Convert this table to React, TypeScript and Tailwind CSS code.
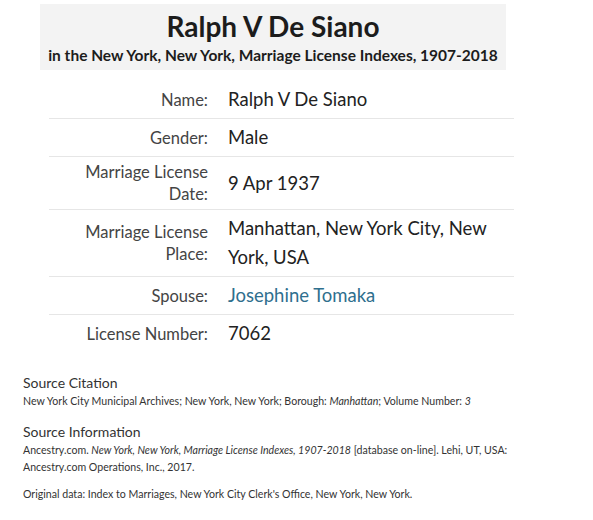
const rows: { label: string[]; value: React.ReactNode; link?: boolean }[] = [
  { label: ['Name:'], value: 'Ralph V De Siano' },
  { label: ['Gender:'], value: 'Male' },
  { label: ['Marriage License', 'Date:'], value: '9 Apr 1937' },
  { label: ['Marriage License', 'Place:'], value: 'Manhattan, New York City, New York, USA' },
  { label: ['Spouse:'], value: 'Josephine Tomaka', link: true },
  { label: ['License Number:'], value: '7062' },
];

export default function App() {
  return (
    <div className="w-[593px] h-[520px] bg-white text-[#333] font-['Lato',sans-serif] overflow-hidden">
      {/* Header */}
      <div className="ml-[40px] mt-[4px] w-[466px] h-[66px] bg-[#f3f3f3] flex flex-col items-center pt-[5px]">
        <h1 className="text-[28px] leading-[35px] font-bold text-[#1c1c1c]">Ralph V De Siano</h1>
        <h2 className="text-[15.5px] leading-[20px] font-bold text-[#1c1c1c] whitespace-nowrap mt-[1px]">
          in the New York, New York, Marriage License Indexes, 1907-2018
        </h2>
      </div>

      {/* Record table */}
      <div className="ml-[49px] mt-[11px] w-[465px]">
        {rows.map((r, i) => (
          <div
            key={i}
            className={`flex items-center py-1 ${i < rows.length - 1 ? 'border-b border-[#e6e6e6]' : ''}`}
          >
            <div className="w-[159px] shrink-0 text-right text-[16.5px] leading-[22px] text-[#444]">
              {r.label.map((l, j) => (
                <div key={j}>{l}</div>
              ))}
            </div>
            <div
              className={`pl-[20px] pr-[20px] text-[18.5px] leading-[29px] ${
                r.link ? 'text-[#2f6f8e]' : 'text-[#222]'
              }`}
            >
              {r.value}
            </div>
          </div>
        ))}
      </div>

      {/* Source */}
      <div className="pl-[23px] mt-[22px] w-[545px]">
        <div className="text-[14px] leading-[18px] text-[#333]">Source Citation</div>
        <p className="text-[10.6px] leading-[17px] text-[#333] mt-[1px]">
          New York City Municipal Archives; New York, New York; Borough: <i>Manhattan</i>; Volume Number: <i>3</i>
        </p>

        <div className="text-[14px] leading-[18px] text-[#333] mt-[13px]">Source Information</div>
        <p className="text-[10.6px] leading-[17px] text-[#333] mt-[1px]">
          Ancestry.com. <i>New York, New York, Marriage License Indexes, 1907-2018</i> [database on-line]. Lehi, UT, USA:
          Ancestry.com Operations, Inc., 2017.
        </p>
        <p className="text-[10.6px] leading-[17px] text-[#333] mt-[10px]">
          Original data: Index to Marriages, New York City Clerk's Office, New York, New York.
        </p>
      </div>
    </div>
  );
}
